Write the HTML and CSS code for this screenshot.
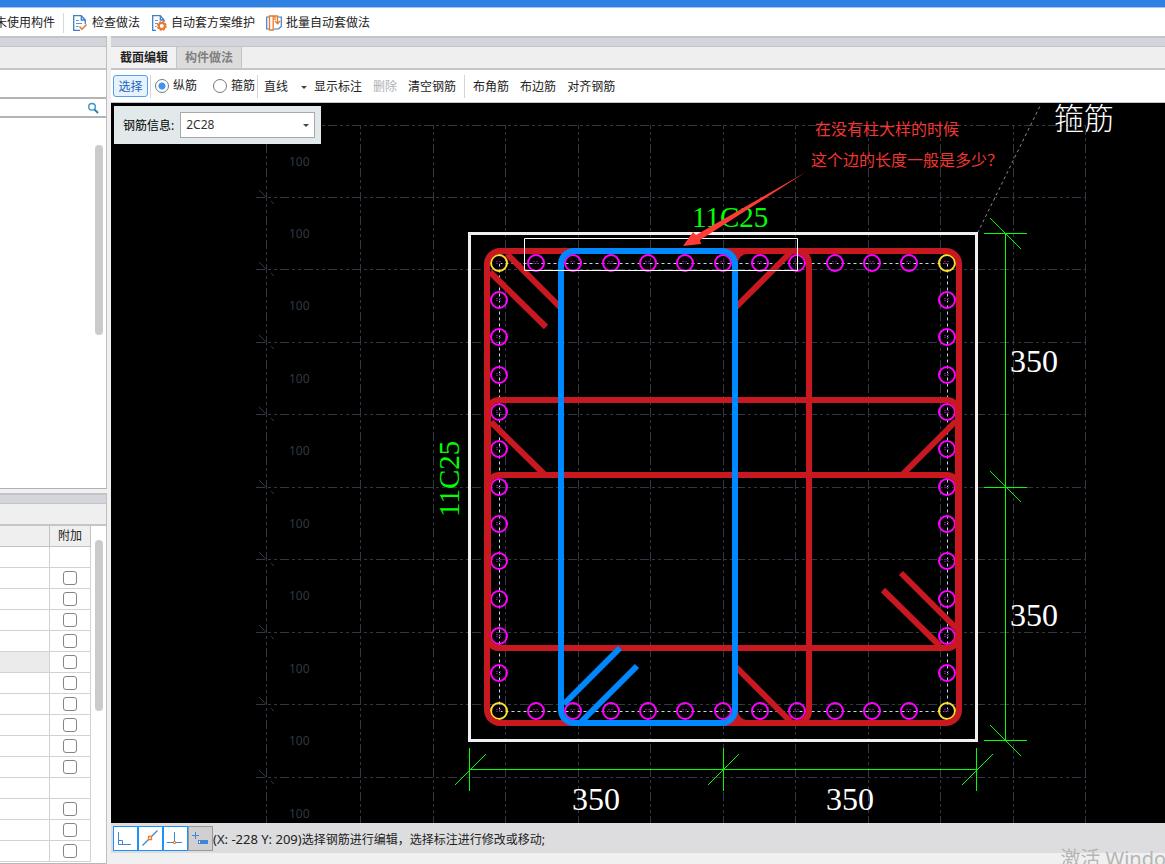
FILE: index.html
```html
<!DOCTYPE html>
<html lang="zh-CN">
<head>
<meta charset="utf-8">
<title>截面编辑</title>
<link rel="stylesheet" href="styles.css">
</head>
<body>
<div class="title-strip"></div>
<nav class="ribbon">
  <button class="ribbon-btn first">未使用构件</button>
  <span class="ribbon-sep"></span>
  <button class="ribbon-btn"><svg width="16" height="16" viewBox="0 0 16 16" fill="none"><path d="M8 15.3H1.7V.7h7.600L13.300 5v4M9.300 .7V5h4" stroke="#3f7fc8" stroke-width="1.300"/><path d="M4 5.500h3M4 8.500h6M4 11.500h2.500" stroke="#5d97d8"/><path d="M7.500 11.500l2.500 2.700L14.500 9.500" stroke="#e8792c" stroke-width="1.600"/></svg>检查做法</button>
  <button class="ribbon-btn"><svg width="16" height="16" viewBox="0 0 16 16" fill="none"><path d="M5 15.300H1.700V.7h7.600L13 5v2M9.300 .7V5H13" stroke="#3f7fc8" stroke-width="1.300"/><path d="M4 5.500h3M4 8.500h3M4 11.500h1.500" stroke="#5d97d8"/><circle cx="10.800" cy="11" r="3" stroke="#e8792c" stroke-width="2"/><circle cx="10.800" cy="11" r="4.300" stroke="#e8792c" stroke-width="1.300" stroke-dasharray="2 1.380"/></svg>自动套方案维护</button>
  <button class="ribbon-btn"><svg width="16" height="16" viewBox="0 0 16 16" fill="none"><path d="M3 2H.7v12H3M12 2h3.300v9.500L12.500 14H8" stroke="#3f7fc8" stroke-width="1.200"/><path d="M3.500 1h3.700v14H3.500z" stroke="#e8792c" stroke-width="1.300"/><path d="M7 1h4.500v7M9 6l2.500 2.700L14 6M9 1v4" stroke="#e8792c" stroke-width="1.300"/></svg>批量自动套做法</button>
</nav>
<div class="workspace">
  <aside class="side">
    <section class="pane pane-top">
      <div class="pane-band"></div>
      <div class="pane-head"></div>
      <div class="pane-tools"></div>
      <label class="search"><input type="text" aria-label="搜索"><svg width="12" height="12" viewBox="0 0 12 12" fill="none"><circle cx="5" cy="4.800" r="3.300" stroke="#3c93c4" stroke-width="1.400"/><path d="M7.500 7.500L11 11" stroke="#2c7fb0" stroke-width="2"/></svg></label>
      <div class="pane-list"><span class="thumb"></span></div>
    </section>
    <section class="pane pane-bottom">
      <div class="pane-band"></div>
      <div class="pane-head"></div>
      <div class="table-wrap">
        <table class="props">
          <thead><tr><th></th><th>附加</th></tr></thead>
          <tbody id="rows"></tbody>
        </table>
        <span class="thumb"></span>
      </div>
    </section>
  </aside>
  <main class="editor">
    <div class="pane-band"></div>
    <div class="tabs">
      <button class="tab active">截面编辑</button><button class="tab">构件做法</button>
    </div>
    <div class="tools">
      <button class="tool pressed">选择</button>
      <span class="sep"></span>
      <label class="radio"><input type="radio" name="kind" checked>纵筋</label>
      <label class="radio second"><input type="radio" name="kind">箍筋</label>
      <span class="sep tight"></span>
      <button class="tool drop">直线<i class="caret"></i></button>
      <button class="tool">显示标注</button>
      <button class="tool" disabled>删除</button>
      <button class="tool">清空钢筋</button>
      <span class="sep wide"></span>
      <button class="tool">布角筋</button>
      <button class="tool">布边筋</button>
      <button class="tool">对齐钢筋</button>
    </div>
    <div class="canvas">
      <svg class="drawing" aria-label="柱截面配筋图">
        <g transform="translate(-111 -103)">
          <g id="grid" class="grid"></g>
          <path class="leader" d="M977.500 233L1041 104"/>
          <path class="outline" d="M469.500 233.500H976.500V740.500H469.500z"/>
          <path class="axis" d="M499.500 263.500H947.500M499.500 711.500H947.500M499.500 263.500V711.500M947.500 263.500V711.500"/>
          <g id="bars" class="bars"></g>
          <g class="stirrup">
            <rect x="487" y="251" width="472" height="472" rx="13"/>
            <rect x="735" y="251" width="74" height="472" rx="12"/>
            <rect x="488" y="400" width="470" height="248" rx="11"/>
            <rect x="488" y="475" width="470" height="173" rx="11"/>
            <path d="M490 272L546 327M507 254L561 308M735 308L791 252M735 666L791 722M491 422L544 474M956 421L903 474M901 573L958 630M883 590L940 646"/>
          </g>
          <g class="stirrup selected">
            <rect x="561" y="251" width="174" height="472" rx="13"/>
            <path d="M564 704L620 648M581 722L637 666"/>
          </g>
          <path class="marquee" d="M524.500 238.500H797.500V270.500H524.500z"/>
          <g class="dims">
            <path d="M469.500 769.500H976.500M1005.500 233.500V740.500"/>
            <path d="M469.500 748V791M723.500 748V791M976.500 748V791M984 233.500H1027M984 487.500H1027M984 740.500H1027"/>
            <path d="M455 785L486 754M708 785L739 754M962 785L993 754M990 218L1021 249M990 471L1021 502M990 725L1021 756"/>
          </g>
          <g class="dim-text">
            <text x="1010" y="372">350</text>
            <text x="1010" y="626">350</text>
            <text x="572" y="810">350</text>
            <text x="826" y="810">350</text>
          </g>
          <g class="bar-text">
            <text x="692" y="227">11C25</text>
            <text transform="translate(459 517) rotate(-90)">11C25</text>
          </g>
          <text class="stirrup-text" x="1054" y="129">箍筋</text>
          <path class="arrow" d="M683 246L693 232 696 235 806 172 700 240 701 244z"/>
          <g class="note">
            <text x="815" y="135">在没有柱大样的时候</text>
            <text x="811" y="166">这个边的长度一般是多少？</text>
          </g>
        </g>
      </svg>
      <div class="info">
        <label for="spec">钢筋信息:</label>
        <span class="combo"><select id="spec"><option>2C28</option></select><i class="caret"></i></span>
      </div>
    </div>
    <footer class="status">
      <button class="snap" aria-label="正交"><svg width="23" height="23" fill="none" stroke="#3f86d8"><path d="M4.500 5v12.500H17M4.500 13.500h4v4"/></svg></button>
      <button class="snap" aria-label="中点"><svg width="23" height="23" fill="none" stroke="#3f86d8"><path d="M3.500 18.500L18.500 3.500" stroke-width="1.300"/><path d="M9.500 9.500h3v3h-3z" stroke="#f07a28" stroke-width="1.300" fill="#fff"/></svg></button>
      <button class="snap" aria-label="垂点"><svg width="23" height="23" fill="none" stroke="#3f86d8"><path d="M10.500 5v12M3 15.500h15"/><path d="M9.500 14.500h2v2h-2z" stroke="#f07a28" fill="#fff"/></svg></button>
      <button class="snap off" aria-label="动态输入"><svg width="23" height="23" fill="none" stroke="#3f86d8"><path d="M3 8.500h7M6.500 5v7"/><path d="M9 13h10v4H9z" fill="#3f86d8" stroke="none"/><path d="M10.500 14v2" stroke="#fff"/></svg></button>
      <p class="hint"><span class="coords">(X: -228 Y: 209)</span>选择钢筋进行编辑，选择标注进行修改或移动;</p>
    </footer>
  </main>
</div>
<div class="watermark">激活 Windows</div>
<script src="main.js"></script>
</body>
</html>
```
FILE: styles.css
```css
* { box-sizing: border-box; }
html { overflow: hidden; }
body {
  margin: 0;
  height: 100vh;
  display: flex;
  flex-direction: column;
  overflow: hidden;
  background: #f0f0f0;
  color: #222;
  font: 12px/16px "Noto Sans", "Noto Sans CJK SC", sans-serif;
}
button, input, select { font: inherit; color: inherit; margin: 0; }
button { background: none; border: 0; padding: 0; white-space: nowrap; }

.title-strip { height: 8px; flex: none; background: #2e80e3; border-bottom: 1px solid #a9c4e6; }
.ribbon {
  flex: none;
  height: 28px;
  display: flex;
  align-items: center;
  padding-top: 1px;
  background: #fff;
}
.ribbon-btn { display: flex; align-items: center; gap: 4px; height: 20px; margin-right: 11px; }
.ribbon-btn svg { flex: none; }
.ribbon-btn.first { margin-left: -5px; margin-right: 8px; }
.ribbon-sep { width: 1px; height: 20px; background: #d8d8d8; margin-right: 8px; }

.workspace { flex: 1; min-height: 0; display: flex; gap: 4px; }
.pane-band {
  flex: none;
  height: 11px;
  background: #d4d5da;
  border-top: 2px solid #c1c4ca;
  border-bottom: 1px solid #c1c4ca;
}
.side { width: 107px; flex: none; display: flex; flex-direction: column; gap: 4px; }
.pane { display: flex; flex-direction: column; border-right: 1px solid #bfbfc3; }
.pane-top { height: 453px; flex: none; border-bottom: 1px solid #b0b0b0; }
.pane-bottom { flex: 1; min-height: 0; border-bottom: 1px solid #b8b8b8; }
.pane-head { flex: none; height: 23px; background: #efefef; border-bottom: 2px solid #c3c5cb; }
.pane-bottom .pane-head { height: 22px; }
.pane-tools { flex: none; height: 27px; background: #fff; }
.search {
  flex: none;
  height: 21px;
  display: flex;
  align-items: center;
  padding-right: 7px;
  background: #fff;
  border-top: 2px solid #b4b4b4;
  border-bottom: 2px solid #b4b4b4;
}
.search input { flex: 1; min-width: 0; border: 0; outline: 0; background: none; height: 16px; }
.pane-list { flex: 1; background: #fff; display: flex; justify-content: flex-end; padding: 27px 3px 0 0; }
.thumb { width: 8px; height: 190px; border-radius: 4px; background: #cbcbcb; }
.table-wrap { flex: 1; min-height: 0; display: flex; overflow: hidden; background: #fff; }
.table-wrap .thumb { flex: none; height: 171px; margin: 14px 3px 0 4px; }
.props { flex: 1; border-collapse: collapse; table-layout: fixed; height: max-content; }
.props th, .props td { height: 21px; padding: 0; border: 1px solid #d2d2d2; border-left: 0; border-top: 0; }
.props th { height: 20px; background: #efefef; font-weight: 400; border-color: #c3c3c3; width: 41px; }
.props th:first-child { width: auto; }
.props td { text-align: center; }
.props .current td:first-child { background: #ebebeb; }
.props input {
  appearance: none;
  display: block;
  width: 14px;
  height: 14px;
  margin: 0 auto;
  border: 1px solid #858585;
  border-radius: 3px;
  background: #fff;
}

.editor { flex: 1; min-width: 0; display: flex; flex-direction: column; }
.tabs { flex: none; height: 23px; display: flex; background: #efefef; border-bottom: 2px solid #c3c5cb; }
.tab { padding: 1px 8px 0 9px; font-weight: 700; color: #808080; background: #dcdcdc; border-right: 1px solid #c3c5cb; }
.tab + .tab { padding: 1px 8px 0; }
.tab.active { background: #f2f2f2; color: #222; }
.tools {
  flex: none;
  height: 33px;
  display: flex;
  align-items: center;
  padding-left: 2px;
  background: #fff;
  border-bottom: 1px solid #c3c5cb;
}
.tool { height: 22px; padding: 2px 4px 0; margin-right: 3px; border-radius: 3px; }
.tool:disabled { color: #adb1b5; }
.tool.pressed { margin: 0; padding: 2px 4px 0; width: 35px; border: 1px solid #559ff0; background: #e8f2fd; color: #1666c0; }
.tool.drop { display: flex; align-items: center; gap: 13px; padding-right: 0; }
.caret { border: 3px solid transparent; border-top-color: #444; border-bottom: 0; }
.sep { width: 1px; height: 23px; background: #d4d4d4; margin: 0 4px 0 2px; }
.sep.tight { margin: 0 2px; }
.sep.wide { margin: 0 4px 0 1px; }
.radio { display: flex; align-items: center; gap: 4px; }
.radio.second { margin-left: 16px; }
.radio input {
  appearance: none;
  width: 14px;
  height: 14px;
  border: 1px solid #777;
  border-radius: 50%;
  background: #fff;
}
.radio input:checked { background: radial-gradient(circle, #3f92f2 0 3px, #fff 4px); }

.canvas { flex: 1; min-height: 0; position: relative; overflow: hidden; background: #000; }
.drawing { display: block; width: 100%; height: 100%; }
.info {
  position: absolute;
  left: 3px;
  top: 3px;
  display: flex;
  align-items: center;
  gap: 6px;
  height: 38px;
  padding: 0 6px 0 9px;
  background: #e1e9ea;
  color: #000;
}
.info label { padding-top: 2px; }
.combo { display: flex; align-items: center; width: 135px; height: 26px; background: #fff; border: 1px solid #a9a9a9; }
.combo select { flex: 1; height: 24px; padding: 0 5px; appearance: none; border: 0; background: none; outline: 0; font-size: 12px; color: #333; }
.combo .caret { margin-right: 5px; }

.grid path { stroke: #303843; stroke-dasharray: 9 3 3 3 3 3; shape-rendering: crispEdges; }
.grid .vert { stroke-dashoffset: 5; }
.grid .tick { stroke-dasharray: none; }
.grid text { fill: #303843; font-size: 12px; }
.leader { stroke: #888; stroke-dasharray: 3 3; }
.outline { fill: none; stroke: #f0f0f0; stroke-width: 3; }
.axis { stroke: #c6d8ee; stroke-dasharray: 3 3; }
.bars circle { fill: none; stroke: #f0f; stroke-width: 2; }
.bars .corner { stroke: #ffdf30; }
.bars path { stroke: #70107a; stroke-dasharray: 2 1; }
.stirrup { fill: none; stroke: #c81820; stroke-width: 6; }
.stirrup.selected { stroke: #0088ff; }
.marquee { fill: none; stroke: #fff; }
.dims { stroke: #00ff00; }
.dim-text { fill: #fff; font: 32px "Liberation Serif", serif; }
.bar-text { fill: #00ff00; font: 29px "Liberation Serif", serif; }
.stirrup-text { fill: #fff; font-size: 30px; font-weight: 300; }
.arrow { fill: #ff3b36; }
.note { fill: #f33530; font-size: 16px; }

.status {
  flex: none;
  height: 30px;
  margin-bottom: 11px;
  padding-left: 2px;
  display: flex;
  align-items: center;
  background: #dddddf;
  white-space: nowrap;
}
.snap { width: 25px; height: 25px; border: 1px solid #1e90ff; background: #fff; }
.snap svg { display: block; }
.snap.off { background: #d0d0d3; border-color: #999; }
.hint { margin: 0; padding-top: 2px; }
.coords { font-size: 13px; }
.watermark {
  position: absolute;
  right: -26px;
  bottom: -9px;
  color: #b5b5b5;
  font-size: 20px;
  line-height: 28px;
  white-space: nowrap;
}
```
FILE: main.js
```js
const NS = 'http://www.w3.org/2000/svg';
function add(parent, tag, attrs, text) {
  const el = document.createElementNS(NS, tag);
  for (const k in attrs) el.setAttribute(k, attrs[k]);
  if (text) el.textContent = text;
  parent.appendChild(el);
}

// Reference grid, with one spacing label per row
const grid = document.getElementById('grid');
[266, 360, 433, 505, 578, 650, 723, 795, 868, 940, 1013, 1085].forEach(x =>
  add(grid, 'path', { class: 'vert', d: `M${x + 0.5} 125V830` }));
[125, 197, 269, 342, 414, 487, 559, 632, 704, 777].forEach(y => {
  add(grid, 'path', { d: `M256 ${y + 0.5}H1086` });
  add(grid, 'path', { class: 'tick', d: `M259 ${y - 7}l7 7m5 4l3 3` });
  add(grid, 'text', { x: 289, y: y + 41 }, '100');
});

// Longitudinal bars: 13 along each side of the column
const bars = document.getElementById('bars');
const step = 448 / 12;
function bar(i, j) {
  const x = Math.floor(499 + i * step), y = Math.floor(263 + j * step);
  const corner = i % 12 === 0 && j % 12 === 0;
  add(bars, 'circle', { cx: x, cy: y, r: 8, class: corner ? 'corner' : 'side-bar' });
  add(bars, 'path', { d: `M${x - 3} ${y - 1.5}h6m-6 2h6` });
}
for (let i = 0; i <= 12; i++) { bar(i, 0); bar(i, 12); }
for (let j = 1; j < 12; j++) { bar(0, j); bar(12, j); }

// Property rows; rows 0 and 11 are group headings with no tick box
const rows = document.getElementById('rows');
for (let i = 0; i < 15; i++) {
  const box = i === 0 || i === 11 ? '' : '<input type="checkbox" aria-label="附加">';
  rows.insertAdjacentHTML('beforeend', `<tr class="${i === 5 ? 'current' : ''}"><td></td><td>${box}</td></tr>`);
}
```
